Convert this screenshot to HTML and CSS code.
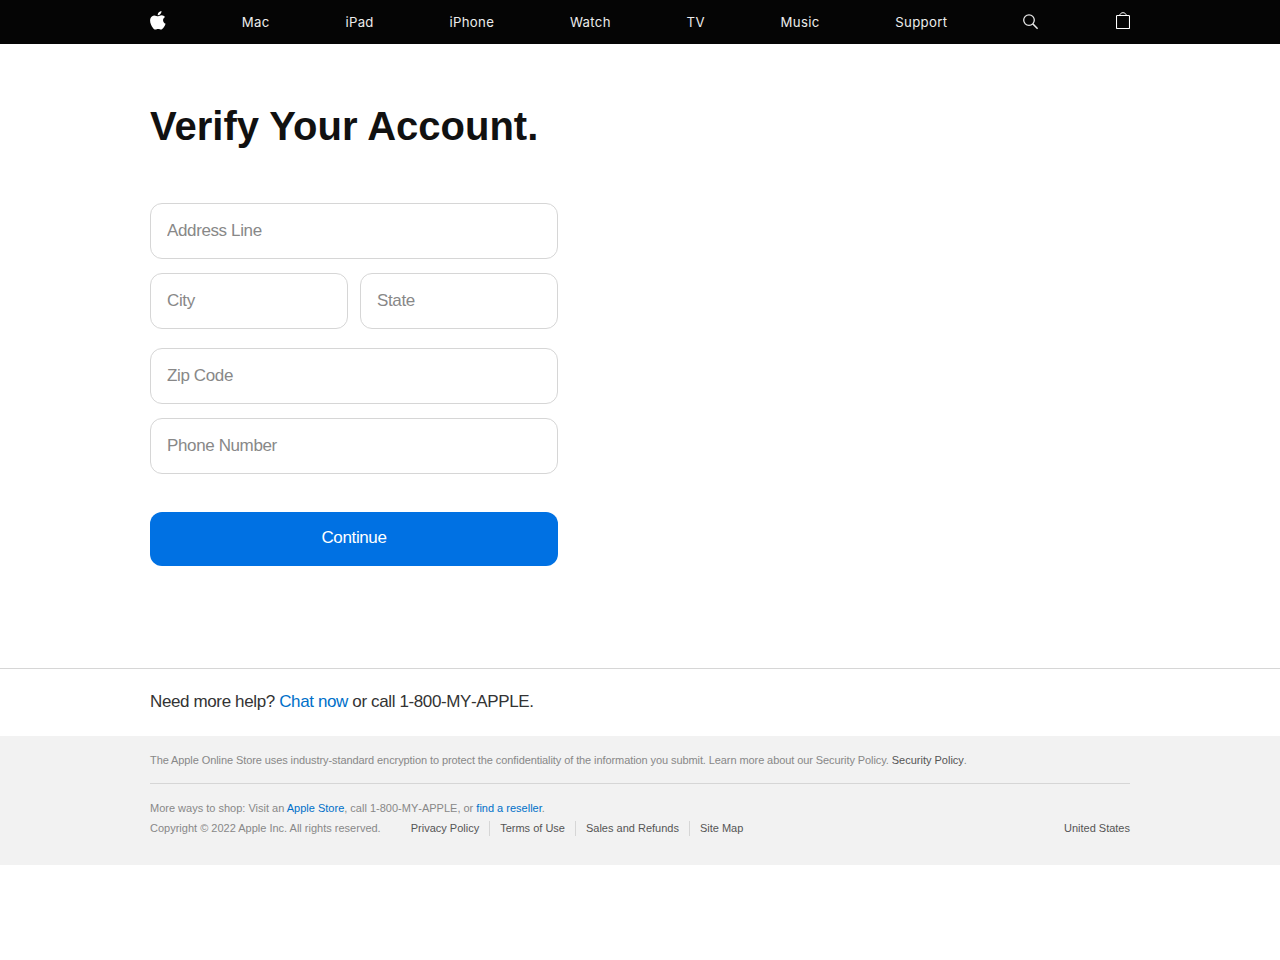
FILE: index.html
```html
<!DOCTYPE html>
<html lang="en">
<head>
<meta charset="utf-8">
<title>Verify Your Account</title>
<link rel="stylesheet" href="styles.css">
</head>
<body>
<nav class="nav">
  <div class="wrap nav-list">
    <a class="nav-icon"><svg class="logo" width="16" height="19" viewBox="0 0 16 19" fill="#fff"><path d="M11.500 0c.2 2.400-1.700 4.400-3.800 4.300C7.500 2.200 9.400.2 11.500 0zM8.200 5.300c.8 0 1.900-1 3.500-1 1.300 0 2.500.7 3.300 1.700-2.900 1.800-2.400 5.600.6 6.800-.5 1.500-1.300 3-2.300 4.200-.7.900-1.400 1.500-2.300 1.500-1 0-1.500-.6-2.800-.6s-1.800.6-2.800.6c-.9 0-1.700-.7-2.400-1.600C.6 13.900-.7 9.600.6 6.900c.8-1.600 2.200-2.500 3.700-2.500 1.600 0 2.700.9 3.900.9z"/></svg></a>
    <a>Mac</a>
    <a>iPad</a>
    <a>iPhone</a>
    <a>Watch</a>
    <a>TV</a>
    <a>Music</a>
    <a>Support</a>
    <a class="nav-icon"><svg class="search" width="17" height="16" viewBox="0 0 17 16" fill="none" stroke="#e8e8e8" stroke-width="1.300"><circle cx="6" cy="6.100" r="5.300"/><path d="M9.800 9.900 14.600 14.700" stroke-width="1.500"/></svg></a>
    <a class="nav-icon"><svg class="bag" width="14" height="18" viewBox="0 0 14 18" fill="none" stroke="#fff"><rect x=".5" y="3.500" width="13" height="13" rx=".8" stroke-width="1.100"/><path d="M3.700 3.300C4 1.600 5.400.7 7 .7s3 .9 3.300 2.600"/></svg></a>
  </div>
</nav>
<main class="wrap main">
  <h1 class="title">Verify Your Account.</h1>
  <form class="form">
    <input class="field" placeholder="Address Line">
    <div class="row">
      <input class="field" placeholder="City">
      <input class="field" placeholder="State">
    </div>
    <input class="field" placeholder="Zip Code">
    <input class="field" placeholder="Phone Number">
    <button class="submit" type="button">Continue</button>
  </form>
</main>
<section class="help">
  <p class="wrap">Need more help? <a class="link">Chat now</a> or call <span class="phone">1-800-MY-APPLE</span>.</p>
</section>
<footer class="footer">
  <div class="wrap">
    <p class="security">The Apple Online Store uses industry-standard encryption to protect the confidentiality of the information you submit. Learn more about our Security Policy. <a class="dark">Security Policy</a>.</p>
    <p class="shop">More ways to shop: Visit an <a class="link">Apple Store</a>, call <span class="phone">1-800-MY-APPLE</span>, or <a class="link">find a reseller</a>.</p>
    <div class="legal">
      <span class="copyright">Copyright © 2022 Apple Inc. All rights reserved.</span>
      <a class="legal-link">Privacy Policy</a>
      <a class="legal-link">Terms of Use</a>
      <a class="legal-link">Sales and Refunds</a>
      <a class="legal-link">Site Map</a>
      <a class="country">United States</a>
    </div>
  </div>
</footer>
</body>
</html>
```
FILE: styles.css
```css
* { box-sizing: border-box; }
body { margin: 0; background: #fff; color: #333; font: 17px/25px "Liberation Sans", Arial, sans-serif; letter-spacing: -0.374px; }
p { margin: 0; }
.wrap { width: 980px; margin: 0 auto; }
.nav { height: 44px; background: #050505; }
.nav-list { height: 44px; display: flex; justify-content: space-between; align-items: center; color: #ececec; font: 400 13.2px/44px Inter, sans-serif; letter-spacing: 0.3px; }
.nav-icon { display: flex; height: 44px; align-items: flex-start; }
.logo { margin-top: 11px; }
.search { margin-top: 14px; }
.bag { margin-top: 12px; }
.main { height: 624px; padding-top: 58px; }
.title { margin: 0; font-size: 40px; line-height: 48px; font-weight: 700; color: #111; letter-spacing: 0; }
.form { width: 408px; margin-top: 53px; display: flex; flex-direction: column; }
.field { width: 100%; min-width: 0; height: 56px; margin: 0 0 14px; padding: 0 16px; border: 1px solid #d6d6d6; border-radius: 12px; background: #fff; color: #333; font: inherit; letter-spacing: inherit; }
.field::placeholder { color: #888; opacity: 1; }
.row { display: flex; gap: 12px; margin-bottom: 5px; }
.submit { height: 54px; margin-top: 24px; padding: 0 0 3px; border: 0; border-radius: 12px; background: #0071e3; color: #fff; font: inherit; letter-spacing: inherit; }
.help { height: 68px; border-top: 1px solid #d6d6d6; padding-top: 20px; }
.link { color: #0070c9; }
.phone { font-kerning: none; }
.footer { height: 129px; background: #f2f2f2; padding-top: 17px; color: #888; font-size: 11px; line-height: 15px; letter-spacing: 0; }
.security { padding-bottom: 15px; border-bottom: 1px solid #d6d6d6; letter-spacing: -0.088px; }
.dark { color: #555; letter-spacing: 0; }
.shop { margin-top: 17px; }
.legal { display: flex; margin-top: 5px; color: #555; }
.copyright { color: #888; margin-right: 30px; }
.legal-link { padding-right: 10px; margin-right: 10px; border-right: 1px solid #d6d6d6; }
.legal-link:nth-last-child(2) { border: 0; }
.country { margin-left: auto; }
```
